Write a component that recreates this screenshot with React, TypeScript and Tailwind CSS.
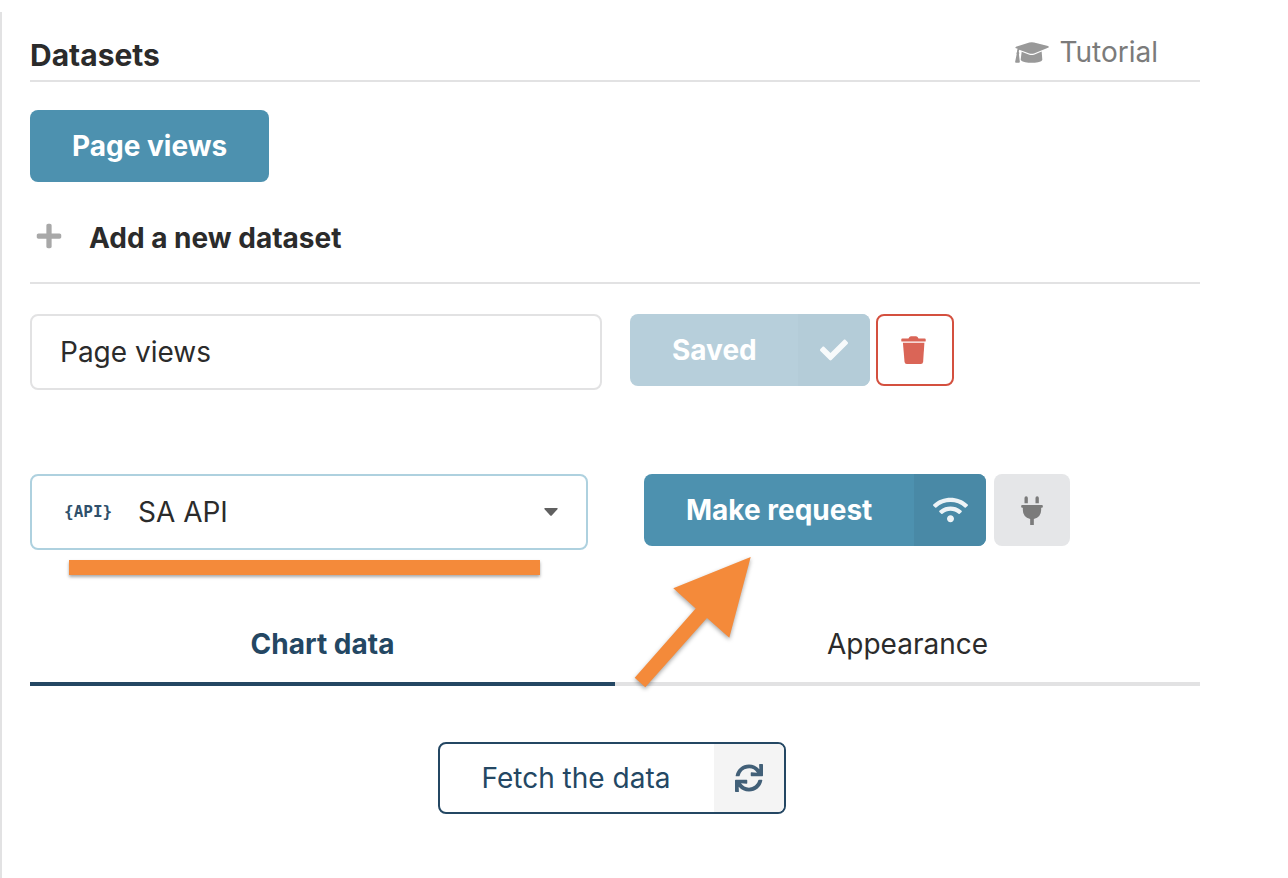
import { useState } from 'react';
import { FaCheck, FaPlus, FaSync, FaWifi } from 'react-icons/fa';

function CapIcon() {
  return (
    <svg aria-hidden="true" viewBox="0 0 102 63" className="h-[21px] w-[34px]" fill="#999999">
      <path d="M3 14L43 1.4Q50 -.4 57 1.2L99 12Q104 14.600 99 17.400L57 34.200Q50 36.600 43 34.200L13 23Q11.500 25 11.400 30Q14 33 11.800 37L14.500 59Q14.600 62 12 62H3Q0 62 .4 59L5 37Q3 33 6 30Q6 23 8 20.500L3 18.600Q-.8 16.500 3 14Z" />
      <path d="M20 29.500L43 38Q50 40.400 57 38L80 28.500L82 53Q81 58 69 60.500Q50 64.500 31 60.500Q19 58 17 53Z" />
    </svg>
  );
}

function TrashIcon() {
  return (
    <svg aria-hidden="true" viewBox="0 0 75 86" className="h-7 w-[25px]" fill="#da6557">
      <path d="M3 8H22L25 3Q27 1 30 1H45Q48 1 50 3L53 8H72Q75 8 75 11V15Q75 17 72 17H3Q0 17 0 15V11Q0 8 3 8Z" />
      <path d="M5 21H71L67 80Q66.400 86 60 86H17Q10.600 86 10 80Z" />
    </svg>
  );
}

function PlugIcon() {
  return (
    <svg aria-hidden="true" viewBox="0 0 65 87" className="h-[29px] w-[22px]" fill="#7b7b7b">
      <path d="M10 22V6Q10 1 15 1T20 6V22ZM43 22V6Q43 1 48 1T53 6V22Z" />
      <path d="M3 27H62Q65 27 65 30V32Q65 35 62 35H60V42Q60 63 38 69V87H27V69Q5 63 5 42V35H3Q0 35 0 32V30Q0 27 3 27Z" />
    </svg>
  );
}

function UnderlineMark() {
  return (
    <div
      aria-hidden="true"
      className="pointer-events-none absolute top-[86px] left-[39px] h-[15px] w-[471px] bg-[#f48a3a] shadow-[0_2px_3px_rgba(0,0,0,0.35)]"
    />
  );
}

function ArrowMark() {
  return (
    <svg
      aria-hidden="true"
      viewBox="0 0 124 140"
      className="pointer-events-none absolute top-[80px] left-[600px] h-[140px] w-[124px] drop-shadow-[0_2px_2px_rgba(0,0,0,0.35)]"
    >
      <path d="M120.7 3L43.3 34.3L65.7 54.5L4.7 123.7L15.3 133.3L77 64L99.3 83.7Z" fill="#f48a3a" />
    </svg>
  );
}

export default function App() {
  const [name, setName] = useState('Page views');
  const [tab, setTab] = useState('data');
  const tabClass = (active: boolean) =>
    active
      ? 'h-[84px] border-b-4 border-[#244763] pt-1 font-bold text-[#244763]'
      : 'h-[84px] border-b-4 border-[#e2e2e3] pt-1 text-[#2b2b2b]';

  return (
    <div className="flex min-h-screen flex-col bg-white pt-3 font-['Inter',sans-serif] text-[28px] leading-9 text-[#2b2b2b]">
      <main className="grow border-l-2 border-[#e2e2e3] pr-[88px] pl-7">
        <header className="flex h-[70px] items-end justify-between border-b-2 border-[#e2e2e3] pb-[7px]">
          <h1 className="text-[30px] font-bold">Datasets</h1>
          <a href="#tutorial" className="mr-[42px] mb-[3px] flex items-center gap-[10px] text-[#7b7b7b]">
            <CapIcon />
            Tutorial
          </a>
        </header>

        <button type="button" className="mt-7 flex h-[72px] items-center rounded-lg bg-[#4d91af] px-[42px] font-bold text-white">
          Page views
        </button>

        <div className="mt-6 border-b-2 border-[#e2e2e3] pb-5">
          <button type="button" className="flex h-14 w-fit items-center gap-[26px] pt-1 pl-[5px] font-bold">
            <FaPlus className="size-7 text-[#a8a8a8]" />
            <span className="pt-1">Add a new dataset</span>
          </button>
        </div>

        <div className="mt-[30px] flex items-start">
          <input
            aria-label="Dataset name"
            value={name}
            onChange={(e) => setName(e.target.value)}
            className="h-[76px] w-[572px] rounded-lg border-2 border-[#e2e2e3] px-7 outline-none"
          />
          <button type="button" className="ml-7 flex h-[72px] items-center overflow-hidden rounded-lg bg-[#b7cfdb] pl-[42px] font-bold text-white">
            Saved
            <span className="ml-[41px] flex size-[72px] items-center justify-center bg-[#b4ccd8]">
              <FaCheck className="size-7 opacity-90" />
            </span>
          </button>
          <button
            type="button"
            aria-label="Delete dataset"
            className="ml-[6px] flex h-[72px] w-[78px] items-center justify-center rounded-lg border-2 border-[#d4503f] pr-[2px]"
          >
            <TrashIcon />
          </button>
        </div>

        <div className="relative mt-[84px] flex items-start">
          <div className="relative">
            <select
              aria-label="Connection"
              className="h-[76px] w-[558px] appearance-none rounded-lg border-2 border-[#aed1df] bg-white pr-16 pl-[106px] outline-none"
            >
              <option>SA API</option>
            </select>
            <span className="pointer-events-none absolute top-5 left-[34px] font-['DejaVu_Sans_Mono',monospace] text-[16px] font-bold text-[#2f506b]">
              {'{API}'}
            </span>
            <svg viewBox="0 0 14 8" className="pointer-events-none absolute top-[34px] right-[30px] h-2 w-[14px]" aria-hidden="true">
              <path d="M1 0H13Q14.4 0 13.4 1.2L8 7.2Q7 8.2 6 7.2L.6 1.2Q-.4 0 1 0Z" fill="#606060" />
            </svg>
          </div>
          <button type="button" className="ml-14 flex h-[72px] items-center overflow-hidden rounded-lg bg-[#4d91af] pl-[42px] font-bold text-white">
            Make request
            <span className="ml-[42px] flex size-[72px] items-center justify-center bg-[#4989a6]">
              <FaWifi className="h-7 w-[35px] opacity-90" />
            </span>
          </button>
          <button
            type="button"
            aria-label="Connection settings"
            className="ml-2 flex h-[72px] w-[76px] items-center justify-center rounded-lg bg-[#e5e6e8]"
          >
            <PlugIcon />
          </button>
          <UnderlineMark />
          <ArrowMark />
        </div>

        <div role="tablist" className="mt-[52px] grid grid-cols-2">
          <button type="button" role="tab" aria-selected={tab === 'data'} onClick={() => setTab('data')} className={tabClass(tab === 'data')}>
            Chart data
          </button>
          <button type="button" role="tab" aria-selected={tab === 'look'} onClick={() => setTab('look')} className={tabClass(tab === 'look')}>
            Appearance
          </button>
        </div>

        <div className="mt-14 flex justify-center pr-[6px]">
          <button type="button" className="flex h-[72px] items-center overflow-hidden rounded-lg border-2 border-[#244763] pl-[42px] text-[#244763]">
            Fetch the data
            <span className="ml-11 flex h-full w-[70px] items-center justify-center bg-[#f4f4f4]">
              <FaSync className="size-7 opacity-85" />
            </span>
          </button>
        </div>
      </main>
    </div>
  );
}
